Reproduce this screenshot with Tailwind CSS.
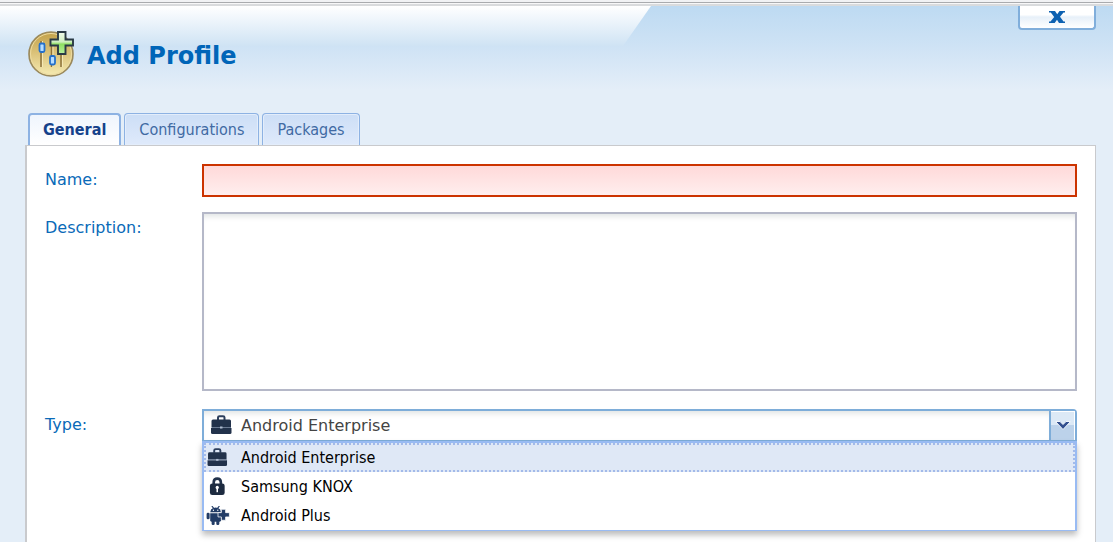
<!DOCTYPE html>
<html lang="en">

<head>
    <meta charset="UTF-8" />
    <meta name="viewport" content="width=device-width, initial-scale=1.0" />
    <title>Add Profile</title>
    <script src="https://cdn.jsdelivr.net/npm/@tailwindcss/browser@4"></script>
</head>

<body class="bg-[#e4eef8] min-h-screen flex flex-col font-['DejaVu_Sans',Verdana,sans-serif]">

    <svg class="hidden" aria-hidden="true">
        <symbol id="icon-briefcase" viewBox="0 0 24 20">
            <path d="M8 5V2.600Q8 1.200 9.500 1.200H13Q14.500 1.200 14.500 2.600V5" fill="none" stroke="#2c3e5c" stroke-width="2" />
            <path d="M3 4.500H19.500Q21 4.500 21 6V12H1.500V6Q1.500 4.500 3 4.500Z" fill="#22324b" />
            <path d="M1 13H21.500V17.500Q21.500 19 20 19H2.500Q1 19 1 17.500Z" fill="#22324b" />
            <path d="M1.500 12H21V13H1.500Z" fill="#6b7b93" />
            <rect x="10" y="11.500" width="2.500" height="2" fill="#aebbd0" />
        </symbol>
        <symbol id="icon-lock" viewBox="0 0 24 20">
            <path d="M7.500 8.500V5.500Q7.500 1.700 11.200 1.700T15 5.500V8.500" fill="none" stroke="#22324b" stroke-width="2.800" />
            <rect x="3.500" y="6.800" width="15.500" height="12.200" rx="2.500" fill="#1d2b40" />
            <circle cx="11.200" cy="11" r="1.700" fill="#fff" />
            <rect x="10.400" y="11.500" width="1.600" height="4.500" fill="#fff" />
        </symbol>
        <symbol id="icon-android" viewBox="0 0 24 20">
            <g fill="#223c66">
                <path d="M3.800 6.500Q4.500 1.500 9.500 1.500T15.200 6.500Z" />
                <path d="M5.500 0L7.500 2.500M13.500 0L11.500 2.500" stroke="#223c66" stroke-width="1.200" />
                <path d="M3.800 7.500H15.200V15Q15.200 16.500 13.700 16.500H5.300Q3.800 16.500 3.800 15Z" />
                <rect x="0" y="7" width="3.200" height="7" rx="1.500" />
                <rect x="5.300" y="15" width="3.200" height="5" rx="1.300" />
                <rect x="10.200" y="15" width="3.200" height="5" rx="1.300" />
                <path d="M15.500 3.500H20V7H24V11.500H20V15H15.500V11.500H12V7H15.500Z" stroke="#fff" stroke-width="0.800" />
            </g>
            <circle cx="7.200" cy="4.500" r="0.700" fill="#fff" />
            <circle cx="11.800" cy="4.500" r="0.700" fill="#fff" />
        </symbol>
    </svg>

    <!-- window edge -->
    <div class="h-1.5 bg-[#d9dbdd] border-t-2 border-[#f1f2f4]">
        <div class="h-0.5 bg-[#f7f7f8] border-t border-[#a9abae]"></div>
    </div>

    <header class="relative flex items-start justify-between pl-7 pr-4 h-[84px] bg-linear-to-b from-[#bddaf2] via-[#cfe3f5] via-50% to-[#e4eef8]">
        <div class="absolute top-0 left-0 h-10 w-[651px] bg-linear-to-b from-white to-[#cfe3f4] [clip-path:polygon(0_0,100%_0,623px_100%,0_100%)]"></div>

        <div class="relative flex items-center gap-[11px] pt-6">
            <svg class="w-12 h-12" viewBox="0 0 48 48" aria-hidden="true">
                <defs>
                    <linearGradient id="gold" x1="0" y1="0" x2="0" y2="1">
                        <stop offset="0" stop-color="#c2a048" />
                        <stop offset="0.500" stop-color="#dcc47c" />
                        <stop offset="1" stop-color="#f6ecb4" />
                    </linearGradient>
                    <linearGradient id="green" x1="0" y1="0" x2="0" y2="1">
                        <stop offset="0" stop-color="#f1faec" />
                        <stop offset="0.450" stop-color="#d0efc0" />
                        <stop offset="0.550" stop-color="#8ddf60" />
                        <stop offset="1" stop-color="#b9f0a0" />
                    </linearGradient>
                </defs>
                <circle cx="23" cy="24" r="22" fill="url(#gold)" stroke="#9a895c" stroke-width="1.600" />
                <circle cx="23" cy="24" r="20.500" fill="none" stroke="#eddba0" stroke-width="1" />
                <path d="M13 11V37M23.500 14V37M33 20V37" stroke="#8c713a" stroke-width="1.500" />
                <path d="M14.500 11V37M25 14V37M34.500 20V37" stroke="#f5e8b5" stroke-width="1" />
                <rect x="11.500" y="13.500" width="5" height="8.500" rx="1.500" fill="#b4dcff" stroke="#2470cb" stroke-width="1.800" />
                <rect x="22" y="26" width="5" height="8.500" rx="1.500" fill="#b4dcff" stroke="#2470cb" stroke-width="1.800" />
                <path d="M30 2H37.500V9.500H45V15.500H37.500V24H30V15.500H22.500V9.500H30Z" fill="url(#green)" stroke="#2b3a46" stroke-width="1.900" />
            </svg>
            <h1 class="pt-1 text-2xl font-bold text-[#0065b8]">Add Profile</h1>
        </div>

        <button type="button" aria-label="Close"
            class="mr-px flex items-center justify-center w-[78px] h-6 border-2 border-t-0 border-[#80aedb] rounded-b-sm bg-linear-to-b from-white from-40% via-[#e7f0f9] via-50% to-white">
            <svg class="w-4 h-3" viewBox="0 0 16 12" aria-hidden="true">
                <path d="M0 0H6L8.200 3.200L10.500 0H16V1.500H14.500L11 5.800L14.500 10.500H16V12H10L8 8.700L5.700 12H0V10.500H1.500L5.200 6L1.800 1.500H0Z" fill="#0d61b1" />
            </svg>
        </button>
    </header>

    <nav class="flex gap-[3px] pl-7 pt-[23px] font-['DejaVu_Sans_Condensed',Tahoma,sans-serif]" role="tablist">
        <button type="button" role="tab" aria-selected="true"
            class="h-8 px-[13px] border-2 border-b-0 border-[#8db2e3] rounded-t-sm bg-linear-to-b from-[#eff5fd] to-white font-bold text-[#15428b]">General</button>
        <button type="button" role="tab" aria-selected="false"
            class="h-8 px-3.5 pt-px border border-b-0 border-[#8db2e3] rounded-t-sm bg-linear-to-b from-[#ccdef6] to-[#dfeafb] inset-shadow-[0_0_0_1px_#e3edfb] text-[#416aa3]">Configurations</button>
        <button type="button" role="tab" aria-selected="false"
            class="h-8 px-3.5 pt-px border border-b-0 border-[#8db2e3] rounded-t-sm bg-linear-to-b from-[#ccdef6] to-[#dfeafb] inset-shadow-[0_0_0_1px_#e3edfb] text-[#416aa3]">Packages</button>
    </nav>

    <form class="flex-1 flex flex-col ml-[25px] mr-[17px] pt-[18px] px-[18px] bg-white border-t border-l-2 border-r border-[#c9cacd] text-[#0a6ab8]">
        <div class="flex items-start mb-[15px]">
            <label for="name" class="w-[157px] pt-1">Name:</label>
            <input type="text" id="name" name="name" required
                class="flex-1 h-[33px] px-2 border-2 border-[#cc3300] bg-linear-to-b from-[#ffd9d9] to-[#ffeeee] text-[#444444] outline-none" />
        </div>

        <div class="flex items-start mb-[18px]">
            <label for="description" class="w-[157px] pt-1">Description:</label>
            <textarea id="description" name="description"
                class="flex-1 h-[179px] p-2 border-2 border-[#b5b8c8] inset-shadow-[0_6px_6px_-4px_#dde1e1] resize-none text-[#444444] outline-none"></textarea>
        </div>

        <div class="flex items-start">
            <label for="type" class="w-[157px] pt-1">Type:</label>
            <div class="relative flex-1">
                <div class="flex h-[33px] border-2 border-[#7eadd9] rounded-tr-sm">
                    <svg class="absolute left-2 top-1.5 w-6 h-5" aria-hidden="true"><use href="#icon-briefcase" /></svg>
                    <select id="type" name="type"
                        class="flex-1 appearance-none pl-[37px] bg-transparent inset-shadow-[0_6px_6px_-4px_#dde1e1] text-[#444444] outline-none">
                        <option selected>Android Enterprise</option>
                        <option>Samsung KNOX</option>
                        <option>Android Plus</option>
                    </select>
                    <button type="button" aria-label="Open list"
                        class="flex items-center justify-center w-[26px] border-l-2 border-[#7eadd9] bg-linear-to-b from-[#dce9f6] from-50% to-[#bcd2ea] to-50% inset-shadow-[-1px_1px_#ffffff]">
                        <svg class="w-4 h-3" viewBox="0 0 16 12" aria-hidden="true">
                            <path d="M0.500 1.500H5L8 4.500L11 1.500H15.500L8 9.500Z" fill="#33508f" stroke="#f1f6fc" stroke-width="1" />
                        </svg>
                    </button>
                </div>

                <ul role="listbox" aria-label="Type"
                    class="absolute top-8 inset-x-0 border-2 border-b border-[#99bbf3] bg-white shadow-[0_4px_6px_#00000044] text-black font-['DejaVu_Sans_Condensed',Tahoma,sans-serif]">
                    <li role="option" aria-selected="true" class="flex items-center gap-[11px] h-[29px] border-2 border-dotted border-[#a3bae9] bg-[#dfe8f6]">
                        <svg class="w-6 h-5 pb-px" aria-hidden="true"><use href="#icon-briefcase" /></svg>
                        Android Enterprise
                    </li>
                    <li role="option" aria-selected="false" class="flex items-center gap-[11px] h-[29px] px-0.5">
                        <svg class="w-6 h-5 pb-px" aria-hidden="true"><use href="#icon-lock" /></svg>
                        Samsung KNOX
                    </li>
                    <li role="option" aria-selected="false" class="flex items-center gap-[11px] h-[29px] px-0.5">
                        <svg class="w-6 h-5 pb-px" aria-hidden="true"><use href="#icon-android" /></svg>
                        Android Plus
                    </li>
                </ul>
            </div>
        </div>
    </form>
</body>

</html>
